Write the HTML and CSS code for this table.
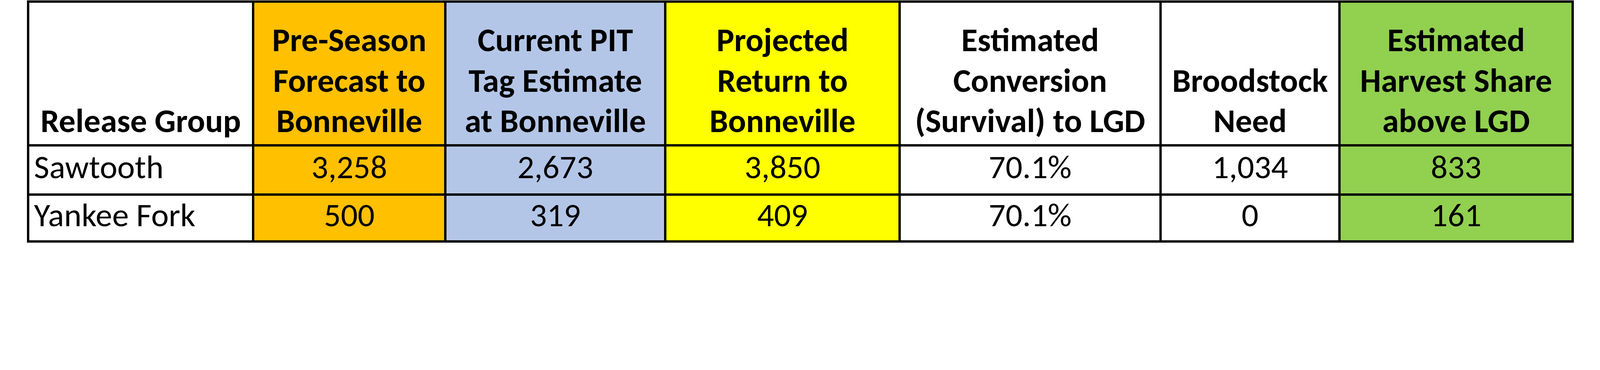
FILE: index.html
```html
<!DOCTYPE html>
<html>
<head>
<meta charset="utf-8">
<link rel="stylesheet" href="styles.css">
</head>
<body>
<table class="grid">
  <colgroup>
    <col class="c-group">
    <col class="c-pre">
    <col class="c-pit">
    <col class="c-proj">
    <col class="c-conv">
    <col class="c-brood">
    <col class="c-harv">
  </colgroup>
  <thead>
    <tr class="head">
      <th class="white">Release Group</th>
      <th class="orange">Pre-Season<br>Forecast to<br>Bonneville</th>
      <th class="blue">Current PIT<br>Tag Estimate<br>at Bonneville</th>
      <th class="yellow">Projected<br>Return to<br>Bonneville</th>
      <th class="white">Estimated<br>Conversion<br>(Survival) to LGD</th>
      <th class="white">Broodstock<br>Need</th>
      <th class="green">Estimated<br>Harvest Share<br>above LGD</th>
    </tr>
  </thead>
  <tbody>
    <tr class="row1">
      <td class="white name">Sawtooth</td>
      <td class="orange">3,258</td>
      <td class="blue">2,673</td>
      <td class="yellow">3,850</td>
      <td class="white">70.1%</td>
      <td class="white">1,034</td>
      <td class="green">833</td>
    </tr>
    <tr class="row2">
      <td class="white name">Yankee Fork</td>
      <td class="orange">500</td>
      <td class="blue">319</td>
      <td class="yellow">409</td>
      <td class="white">70.1%</td>
      <td class="white">0</td>
      <td class="green">161</td>
    </tr>
  </tbody>
</table>
</body>
</html>
```
FILE: styles.css
```css
:root {
  --u: calc(100vw / 4850);
}
html, body {
  margin: 0;
  padding: 0;
  background: #ffffff;
  overflow: hidden;
}
body {
  padding: calc(1 * var(--u)) 0 0 calc(82 * var(--u));
}
.grid {
  border-collapse: collapse;
  table-layout: fixed;
  width: calc(4689 * var(--u));
  font-family: Carlito, Calibri, Lato, "Liberation Sans", sans-serif;
  font-size: calc(101 * var(--u));
  line-height: calc(123 * var(--u));
  color: #000000;
}
.c-group { width: calc(682 * var(--u)); }
.c-pre { width: calc(582 * var(--u)); }
.c-pit { width: calc(667 * var(--u)); }
.c-proj { width: calc(710 * var(--u)); }
.c-conv { width: calc(791 * var(--u)); }
.c-brood { width: calc(542 * var(--u)); }
.c-harv { width: calc(707 * var(--u)); }
.grid th, .grid td {
  border: calc(8 * var(--u)) solid #000000;
  padding: 0;
  text-align: center;
  white-space: nowrap;
  overflow: hidden;
}
.grid th {
  font-weight: bold;
  vertical-align: bottom;
  padding-bottom: calc(8 * var(--u));
}
.grid td {
  font-weight: normal;
  vertical-align: middle;
  line-height: calc(100 * var(--u));
  padding-bottom: calc(18 * var(--u));
}
.grid td.name {
  text-align: left;
  padding-left: calc(14 * var(--u));
}
.head { height: calc(436 * var(--u)); }
.row1 { height: calc(149 * var(--u)); }
.row2 { height: calc(142 * var(--u)); }
.white { background: #ffffff; }
.orange { background: #ffc000; }
.blue { background: #b4c6e7; }
.yellow { background: #ffff00; }
.green { background: #92d050; }
```
